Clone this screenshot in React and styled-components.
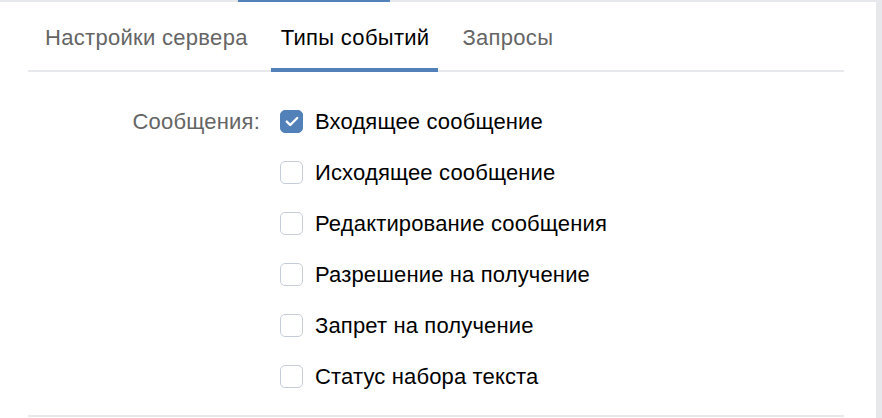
import React from "react";
import styled, { createGlobalStyle } from "styled-components";

const Global = createGlobalStyle`
  html, body { margin: 0; padding: 0; background: #fff; }
  body { font-family: "Liberation Sans", Arial, sans-serif; -webkit-font-smoothing: antialiased; }
`;

const Frame = styled.div`
  width: 876px;
  height: 418px;
  border-right: 6px solid #e7e8ec;
  background: #fff;
  overflow: hidden;
`;

const TopStrip = styled.div`
  display: flex;
  height: 2px;
  background: #e7e8ec;
`;

const TopActive = styled.div`
  margin-left: ${(p) => p.$left}px;
  width: ${(p) => p.$width}px;
  background: #5181b8;
`;

const Body = styled.div`
  padding: 0 32px 0 28px;
`;

const TabBar = styled.div`
  display: flex;
  gap: 14px;
  padding-left: 7px;
  border-bottom: 2px solid #e7e8ec;
  height: 68px;
`;

const Tab = styled.div`
  box-sizing: border-box;
  height: 70px;
  margin-bottom: -2px;
  padding: 6px 9px 0 10px;
  display: flex;
  align-items: center;
  font-size: 22px;
  letter-spacing: 0.3px;
  color: ${(p) => (p.$active ? "#000" : "#656565")};
  border-bottom: 4px solid ${(p) => (p.$active ? "#5181b8" : "transparent")};
`;

const Section = styled.div`
  display: grid;
  grid-template-columns: 232px 1fr;
  column-gap: 20px;
  padding: 24px 0 13px;
  border-bottom: 2px solid #e7e8ec;
`;

const Label = styled.div`
  text-align: right;
  font-size: 22px;
  letter-spacing: 0.2px;
  color: #656565;
  height: 51px;
  line-height: 51px;
`;

const List = styled.div`
  display: flex;
  flex-direction: column;
`;

const Row = styled.label`
  display: flex;
  align-items: center;
  gap: 12px;
  height: 51px;
  font-size: 22px;
  letter-spacing: 0.15px;
  color: #000;
`;

const Box = styled.span`
  box-sizing: border-box;
  width: 23px;
  height: 23px;
  border-radius: 5px;
  border: 1px solid ${(p) => (p.$checked ? "#5181b8" : "#c5ced8")};
  background: ${(p) => (p.$checked ? "#5181b8" : "#fff")};
  display: flex;
  align-items: center;
  justify-content: center;
  flex: none;
`;

const items = [
  ["Входящее сообщение", true],
  ["Исходящее сообщение", false],
  ["Редактирование сообщения", false],
  ["Разрешение на получение", false],
  ["Запрет на получение", false],
  ["Статус набора текста", false],
];

export default function App() {
  return (
    <>
      <Global />
      <Frame>
        <TopStrip>
          <TopActive $left={238} $width={152} />
        </TopStrip>
        <Body>
          <TabBar>
            <Tab>Настройки сервера</Tab>
            <Tab $active>Типы событий</Tab>
            <Tab>Запросы</Tab>
          </TabBar>
          <Section>
            <Label>Сообщения:</Label>
            <List>
              {items.map(([t, c]) => (
                <Row key={t}>
                  <Box $checked={c}>
                    {c && (
                      <svg width="14" height="11" viewBox="0 0 14 11">
                        <path
                          d="M1.8 5.6 L5.2 9 L12.2 2"
                          fill="none"
                          stroke="#fff"
                          strokeWidth="2.4"
                          strokeLinecap="round"
                          strokeLinejoin="round"
                        />
                      </svg>
                    )}
                  </Box>
                  {t}
                </Row>
              ))}
            </List>
          </Section>
        </Body>
      </Frame>
    </>
  );
}
